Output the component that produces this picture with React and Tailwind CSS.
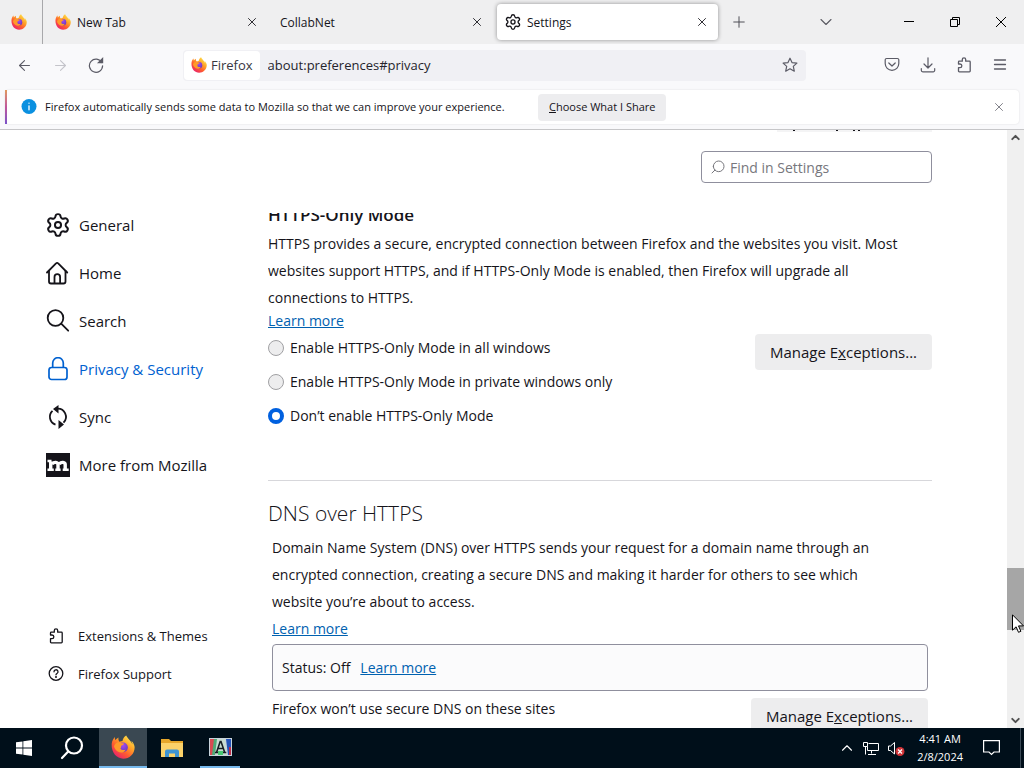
import React, { useState } from 'react'
import { X, Plus, ChevronDown, ChevronUp, ArrowLeft, ArrowRight, Search } from 'lucide-react'

const FirefoxLogo = ({ className }) => (
    <svg viewBox="0 0 32 32" className={className} aria-hidden="true">
        <defs>
            <linearGradient id="ff-body" x1="0.85" y1="0.1" x2="0.2" y2="0.95">
                <stop offset="0" stopColor="#ffe24a" />
                <stop offset="0.35" stopColor="#ffa027" />
                <stop offset="0.65" stopColor="#ff5a30" />
                <stop offset="1" stopColor="#e8206e" />
            </linearGradient>
            <radialGradient id="ff-globe" cx="0.5" cy="0.3" r="0.8">
                <stop offset="0" stopColor="#a44bef" />
                <stop offset="1" stopColor="#5b35b5" />
            </radialGradient>
        </defs>
        <path
            fill="url(#ff-body)"
            d="M30.5 12.5c-.7-1.8-2.3-3.8-3.4-4.4.9 1.8 1.4 3.3 1.6 4.5-1.8-4.5-4.9-6.3-7.5-10.3L20.2.5c-3.4 2-4.6 5.6-4.9 7.4-1.4 0-2.7.4-4 1C10 7.5 9.6 5.5 10 3.3 8.2 4.1 6.8 5.5 5.8 6.8c-.7-.8-.6-3.4-.6-4-1.2 1-4 4.4-4.3 9.2C.3 24 8 31.5 16.2 31.5c8.3 0 15.3-6.4 15.3-15 0-1.4-.3-2.8-1-4z"
        />
        <circle cx="16" cy="16.5" r="6.5" fill="url(#ff-globe)" />
        <path
            fill="#ff9a2a"
            d="M4 15c1.5-5 6-6.5 9-4.8 1.4 1 3.5.6 4.5 1.2.2 1.2-2.7 2.3-3.7 2.8-.8.5.2 2.7-1.3 3.3 1 3 5 3 7 1.8-1 4-6.5 5.5-10.5 2.7C6.5 20.5 4.5 18 4 15z"
        />
    </svg>
)

const GearIcon = ({ className }) => (
    <svg viewBox="1 1 22 22" className={className} fill="none" stroke="currentColor" strokeWidth="1.8" aria-hidden="true">
        <path
            strokeLinejoin="round"
            d="M9.671 4.136a2.34 2.34 0 0 1 4.659 0 2.34 2.34 0 0 0 3.319 1.915 2.34 2.34 0 0 1 2.33 4.033 2.34 2.34 0 0 0 0 3.831 2.34 2.34 0 0 1-2.33 4.033 2.34 2.34 0 0 0-3.319 1.915 2.34 2.34 0 0 1-4.659 0 2.34 2.34 0 0 0-3.32-1.915 2.34 2.34 0 0 1-2.33-4.033 2.34 2.34 0 0 0 0-3.831A2.34 2.34 0 0 1 6.35 6.051a2.34 2.34 0 0 0 3.319-1.915"
        />
        <circle cx="12" cy="12" r="2.8" />
    </svg>
)

const HomeIcon = ({ className }) => (
    <svg viewBox="0 0 24 24" className={className} fill="none" stroke="currentColor" strokeWidth="1.8" strokeLinecap="round" strokeLinejoin="round" aria-hidden="true">
        <path d="M1 11.5 10 2.3a1.5 1.5 0 0 1 2.2 0L21.2 11.5" />
        <path d="M3 10v10.5a2 2 0 0 0 2 2h12.5a2 2 0 0 0 2-2V10" />
        <path d="M8.5 22v-6a2.8 2.8 0 0 1 5.6 0v6" />
    </svg>
)

const SearchIcon = ({ className }) => (
    <svg viewBox="0 0 24 24" className={className} fill="none" stroke="currentColor" strokeWidth="1.8" strokeLinecap="round" aria-hidden="true">
        <circle cx="9.5" cy="9" r="7.8" />
        <path d="m15.2 14.7 7 7" />
    </svg>
)

const LockIcon = ({ className }) => (
    <svg viewBox="0 0 24 24" className={className} fill="none" stroke="currentColor" strokeWidth="1.7" aria-hidden="true">
        <rect x="3" y="10.5" width="18" height="12" rx="2.5" />
        <path d="M6.7 10.5V6a5.3 5.3 0 0 1 10.6 0v4.500" />
    </svg>
)

const SyncIcon = ({ className }) => (
    <svg viewBox="0 0 24 24" className={className} fill="none" stroke="currentColor" strokeWidth="1.8" aria-hidden="true">
        <path d="M9.5 19.6A8.2 8.2 0 0 1 6.5 5.8" />
        <path d="M11 3.6a8.2 8.2 0 0 1 6.5 14" />
        <path fill="currentColor" stroke="none" d="M7 4 12.5 0v8.5zM18 19.5 12.5 15v9z" />
    </svg>
)

const MozillaIcon = ({ className }) => (
    <svg viewBox="0 0 24 24" className={className} aria-hidden="true">
        <rect width="24" height="24" fill="#15141a" />
        <g fill="none" stroke="#fff" strokeWidth="3.4">
            <path d="M4.7 17V8.5M12 17v-5.5c0-2.5-3.8-3-6-.5M19.2 17v-5.5c0-2.5-3.8-3-6-.5" />
        </g>
        <path stroke="#fff" strokeWidth="2.4" d="M1.5 8h4M1.5 16.8h6.3M9.3 16.8h5.3M16.7 16.8h6" />
    </svg>
)

const PuzzleIcon = ({ className }) => (
    <svg viewBox="0 0 16 16" className={className} fill="none" stroke="currentColor" strokeWidth="1.3" strokeLinejoin="round" aria-hidden="true">
        <path d="M2.5 7V5a.8.8 0 0 1 .8-.8h3V2.500a1.700 1.700 0 0 1 3.400 0v1.700h3.700a.8.8 0 0 1 .8.8v9a.8.8 0 0 1-.8.8H3.300a.8.8 0 0 1-.8-.8v-3.300H4a1.800 1.800 0 0 0 0-3.700z" />
    </svg>
)

const HelpIcon = ({ className }) => (
    <svg viewBox="0 0 16 16" className={className} fill="none" stroke="currentColor" strokeWidth="1.3" strokeLinecap="round" aria-hidden="true">
        <circle cx="8" cy="7.5" r="6.8" />
        <path d="M6 5.8a2 2 0 1 1 3 1.700c-.7.400-1 .7-1 1.300" />
        <circle cx="8" cy="11" r="0.4" fill="currentColor" />
    </svg>
)

const ReloadIcon = ({ className }) => (
    <svg viewBox="0 0 16 16" className={className} fill="none" stroke="currentColor" strokeWidth="1.2" strokeLinecap="round" aria-hidden="true">
        <path d="M13.8 5.5A6.6 6.6 0 1 0 14.6 8.8" />
        <path fill="currentColor" d="M14.6 1.5v4.2h-4.2z" />
    </svg>
)

const StarIcon = ({ className }) => (
    <svg viewBox="0 0 16 16" className={className} fill="none" stroke="currentColor" strokeWidth="1.2" strokeLinejoin="round" aria-hidden="true">
        <path d="M8 1.2 10 5.6l4.9.5-3.6 3.3 1 4.8L8 11.8l-4.3 2.4 1-4.8L1.1 6.1 6 5.6z" />
    </svg>
)

const PocketIcon = ({ className }) => (
    <svg viewBox="0 0 16 16" className={className} fill="none" stroke="currentColor" strokeWidth="1.2" strokeLinecap="round" strokeLinejoin="round" aria-hidden="true">
        <path d="M2.6 1.5h10.8a1.4 1.4 0 0 1 1.4 1.4v3.6a6.8 6.8 0 0 1-13.6 0V2.9a1.4 1.4 0 0 1 1.4-1.4z" />
        <path d="m4.8 6 3.2 3 3.2-3" />
    </svg>
)

const DownloadIcon = ({ className }) => (
    <svg viewBox="0 0 16 16" className={className} fill="none" stroke="currentColor" strokeWidth="1.2" strokeLinecap="round" strokeLinejoin="round" aria-hidden="true">
        <path d="M8 .8v10M4 7l4 4 4-4M1.300 11.500v1.800a1.500 1.500 0 0 0 1.500 1.500h10.400a1.500 1.500 0 0 0 1.500-1.500v-1.800" />
    </svg>
)

const MenuIcon = ({ className }) => (
    <svg viewBox="0 0 16 16" className={className} stroke="currentColor" strokeWidth="1.3" strokeLinecap="round" aria-hidden="true">
        <path d="M2.500 3h11M2.500 7.500h11M2.500 12h11" />
    </svg>
)

const InfoIcon = ({ className }) => (
    <svg viewBox="0 0 16 16" className={className} aria-hidden="true">
        <circle cx="8" cy="7.5" r="7.5" fill="#0a90e0" />
        <path stroke="#fff" strokeWidth="1.3" strokeLinecap="round" d="M8 6.8v4M8 4.1v.1" />
    </svg>
)

const Tab = ({ title, icon, active }) => (
    <div
        className={`flex h-9 w-[221px] items-center rounded pr-1 pl-2 text-xs ${
            active ? 'bg-white shadow-[0_0_4px_rgba(0,0,0,0.4)]' : ''
        }`}
    >
        {icon}
        <span className="flex-1 truncate pt-px text-[#15141a]">{title}</span>
        <button type="button" aria-label={`Close ${title}`} className="flex size-6 items-center justify-center">
            <X size={14} strokeWidth={1.5} />
        </button>
    </div>
)

const TabBar = () => (
    <header className="flex h-11 shrink-0 items-center bg-[#efeff0]">
        <div className="flex h-full w-[43px] shrink-0 items-center justify-center border-r border-[#a8a8ab] pr-1">
            <FirefoxLogo className="size-4" />
        </div>
        <div className="flex min-w-0 items-center gap-1 pl-1">
            <Tab title="New Tab" icon={<FirefoxLogo className="mr-[6px] size-4" />} />
            <Tab title="CollabNet" />
            <Tab title="Settings" active icon={<GearIcon className="mr-[6px] size-4" />} />
        </div>
        <button type="button" aria-label="New tab" className="ml-px flex size-10 items-center justify-center text-[#4a4a52]">
            <Plus size={18} strokeWidth={1.3} />
        </button>
        <div className="flex flex-1 items-center justify-end">
            <button type="button" aria-label="List all tabs" className="flex h-11 w-10 items-center justify-center text-[#5a5a62]">
                <ChevronDown size={20} strokeWidth={1.3} />
            </button>
            <div className="ml-10 flex">
                <button type="button" aria-label="Minimize" className="flex h-11 w-[46px] items-center justify-center">
                    <svg viewBox="0 0 10 10" className="size-[10px]" stroke="#000"><path d="M0 4.5h10" /></svg>
                </button>
                <button type="button" aria-label="Restore" className="flex h-11 w-[46px] items-center justify-center">
                    <svg viewBox="0 0 10 10" className="size-[10px]" fill="none" stroke="#000">
                        <path d="M.5 2.500h7v7h-7zM2.500 2.500v-2h7v7h-2" />
                    </svg>
                </button>
                <button type="button" aria-label="Close" className="flex h-11 w-[46px] items-center justify-center">
                    <svg viewBox="0 0 10 10" className="size-[10px]" stroke="#000"><path d="m0 0 10 10M10 0 0 10" /></svg>
                </button>
            </div>
        </div>
    </header>
)

const Toolbar = () => (
    <div className="flex h-[42px] shrink-0 items-center bg-[#f9f9fb] px-4 text-[#5b5b66]">
        <div className="flex w-[167px] shrink-0 gap-[19px]">
            <button type="button" aria-label="Back"><ArrowLeft size={17} strokeWidth={1.5} /></button>
            <button type="button" aria-label="Forward" disabled className="text-[#c4c4ca]"><ArrowRight size={17} strokeWidth={1.5} /></button>
            <button type="button" aria-label="Reload"><ReloadIcon className="size-4" /></button>
        </div>
        <div className="flex h-[31px] flex-1 items-center rounded bg-[#f0f0f4] p-px pr-2">
            <div className="flex h-full items-center gap-1 rounded-sm bg-white px-[7px] text-[13px] text-[#38373f]">
                <FirefoxLogo className="size-4" />
                <span className="pt-px">Firefox</span>
            </div>
            <input
                aria-label="Address"
                defaultValue="about:preferences#privacy"
                className="ml-2 min-w-0 flex-1 bg-transparent pt-px text-[13px] text-[#25242c] outline-none"
            />
            <button type="button" aria-label="Bookmark"><StarIcon className="size-4" /></button>
        </div>
        <div className="ml-[78px] flex gap-5">
            <button type="button" aria-label="Pocket"><PocketIcon className="size-4" /></button>
            <button type="button" aria-label="Downloads"><DownloadIcon className="size-4" /></button>
            <button type="button" aria-label="Extensions"><PuzzleIcon className="size-4" /></button>
            <button type="button" aria-label="Menu"><MenuIcon className="size-4" /></button>
        </div>
    </div>
)

const NotificationBar = () => (
    <div className="shrink-0 border-b border-[#c6c6c8] bg-[#f9f9fb] px-[5px] pt-1 pb-[5px]">
        <div className="flex h-[34px] items-center rounded bg-white shadow-[0_0_2px_rgba(0,0,0,0.12)]">
            <div className="h-full w-[2px] bg-linear-to-b from-[#e0995a] via-[#c0559a] to-[#7a50c8]" />
            <InfoIcon className="mr-2 ml-[14px] size-4" />
            <p className="min-w-[473px] text-[11px] text-[#15141a]">
                Firefox automatically sends some data to Mozilla so that we can improve your experience.
            </p>
            <button type="button" className="ml-5 h-[27px] rounded bg-[#ededef] px-[11px] text-[11px] text-[#15141a]">
                <span className="underline">C</span>hoose What I Share
            </button>
            <button type="button" aria-label="Dismiss" className="mr-[13px] ml-auto text-[#5b5b66]">
                <X size={14} strokeWidth={1.3} />
            </button>
        </div>
    </div>
)

const categories = [
    { label: 'General', icon: GearIcon },
    { label: 'Home', icon: HomeIcon },
    { label: 'Search', icon: SearchIcon },
    { label: 'Privacy & Security', icon: LockIcon },
    { label: 'Sync', icon: SyncIcon },
    { label: 'More from Mozilla', icon: MozillaIcon },
]

const Sidebar = () => (
    <nav className="flex w-[268px] shrink-0 flex-col pt-[71px] pb-[35px] pl-[46px]">
        {categories.map(({ label, icon: Icon }) => (
            <button
                key={label}
                type="button"
                className={`flex h-12 items-center gap-[9px] text-[15px] ${
                    label === 'Privacy & Security' ? 'text-[#0061d0]' : 'text-[#15141a]'
                }`}
            >
                <Icon className="size-6" />
                <span className="pt-px">{label}</span>
            </button>
        ))}
        <div className="mt-auto flex flex-col text-[13px] text-[#15141a]">
            <a href="#addons" className="flex h-[38px] items-center gap-[14px] pl-[2px]">
                <PuzzleIcon className="size-4" />
                <span className="pt-px">Extensions &amp; Themes</span>
            </a>
            <a href="#support" className="flex h-[38px] items-center gap-[14px] pl-[2px]">
                <HelpIcon className="size-4" />
                <span className="pt-px">Firefox Support</span>
            </a>
        </div>
    </nav>
)

const LearnMore = () => (
    <a href="#learn" className="text-[#0061b0] underline">Learn more</a>
)

const ExceptionsButton = () => (
    <button type="button" className="h-9 w-[177px] shrink-0 rounded bg-[#ededee] pt-[2px] text-[15px] font-medium text-[#15141a]">
        Manage E<span className="underline">x</span>ceptions...
    </button>
)

const modes = [
    { id: 'all', label: 'Enable HTTPS-Only Mode in all windows' },
    { id: 'private', label: 'Enable HTTPS-Only Mode in private windows only' },
    { id: 'off', label: 'Don’t enable HTTPS-Only Mode' },
]

const HttpsOnly = () => {
    const [mode, setMode] = useState('off')

    return (
        <section className="border-b border-[#d7d7db] pb-[47px]">
            <h2 className="-mt-2 h-[25px] text-[17px] leading-5 font-semibold">HTTPS-Only Mode</h2>
            <p className="pr-6 leading-[27px]">
                HTTPS provides a secure, encrypted connection between Firefox and the websites you visit. Most
                websites support HTTPS, and if HTTPS-Only Mode is enabled, then Firefox will upgrade all
                connections to HTTPS.
            </p>
            <div className="leading-5"><LearnMore /></div>
            <div className="flex justify-between">
                <div>
                    {modes.map(({ id, label }) => (
                        <label key={id} className="flex h-[34px] items-center gap-[6px]">
                            <input
                                type="radio"
                                name="https-mode"
                                checked={mode === id}
                                onChange={() => setMode(id)}
                                className="size-4 shrink-0 appearance-none rounded-full border border-[#a0a0a3] bg-[#ededee] checked:border-4 checked:border-[#0060df] checked:bg-white"
                            />
                            {label}
                        </label>
                    ))}
                </div>
                <div className="pt-[3px]"><ExceptionsButton /></div>
            </div>
        </section>
    )
}

const DnsOverHttps = () => (
    <section className="pt-[14px]">
        <h1 className="mb-[3px] text-[21px] leading-9 font-light">DNS over HTTPS</h1>
        <div className="px-1">
            <p className="pr-6 leading-[27px]">
                Domain Name System (DNS) over HTTPS sends your request for a domain name through an
                encrypted connection, creating a secure DNS and making it harder for others to see which
                website you’re about to access.
            </p>
            <div className="leading-[27px]"><LearnMore /></div>
            <div className="mt-[2px] flex h-[47px] items-center gap-[10px] rounded border border-[#8f8f9d] bg-[#fbfbfc] px-[9px] pt-px">
                <span>Status: Off</span>
                <LearnMore />
            </div>
            <div className="flex items-start justify-between pt-[7px]">
                <span className="leading-[22px]">Firefox won’t use secure DNS on these sites</span>
                <ExceptionsButton />
            </div>
        </div>
    </section>
)

const Scrollbar = () => (
    <div className="relative ml-auto flex w-[17px] shrink-0 flex-col items-center justify-between bg-[#f0f0f0] text-[#505050]">
        <ChevronUp size={13} strokeWidth={3.5} className="mt-[1px]" />
        <div className="absolute top-[438px] h-[62px] w-full bg-[#a6a6a6]" />
        <ChevronDown size={13} strokeWidth={3.5} className="mb-[1px]" />
        <svg viewBox="0 0 12 19" className="absolute top-[484px] left-[5px] h-[19px] w-3" aria-hidden="true">
            <path d="M.5.8v15.4l3.6-3.4 2.4 5.5 2.4-1-2.4-5.4h5z" fill="#fff" stroke="#000" />
        </svg>
    </div>
)

const Taskbar = () => (
    <footer className="flex h-10 shrink-0 items-center bg-[#000f1a] text-white">
        <button type="button" aria-label="Start" className="flex h-full w-12 items-center justify-center">
            <svg viewBox="0 0 16 16" className="size-4" fill="#fff">
                <path d="M0 2.3 6.5 1.4v6.2H0zM7.3 1.3 16 0v7.6H7.3zM0 8.4h6.5v6.2L0 13.7zM7.3 8.4H16V16l-8.7-1.3z" />
            </svg>
        </button>
        <button type="button" aria-label="Search" className="flex h-full w-12 items-center justify-center">
            <svg viewBox="0 0 24 24" className="size-6" fill="none" stroke="#fff" strokeWidth="2.2" strokeLinecap="round">
                <circle cx="14" cy="9.5" r="8" />
                <path d="M8.2 15.5 2 22" />
            </svg>
        </button>
        <button type="button" aria-label="Firefox" className="ml-[3px] flex h-full w-12 items-center justify-center border-b-2 border-[#76b9ed] bg-[#3a4852]">
            <FirefoxLogo className="size-6" />
        </button>
        <button type="button" aria-label="File Explorer" className="flex h-full w-[50px] items-center justify-center">
            <svg viewBox="0 0 22 18" className="h-[18px] w-[22px]">
                <path fill="#e6a62a" d="M0 0h8l2 2h12v16H0z" />
                <path fill="#fbd26a" d="M0 4h22v14H0z" />
                <path fill="#3f94d2" d="M4 18v-5.5a2 2 0 0 1 2-2h10a2 2 0 0 1 2 2V18h-4v-3.5H8V18z" />
            </svg>
        </button>
        <button type="button" aria-label="Editor" className="ml-[3px] flex h-full w-10 items-center justify-center border-b-2 border-[#76b9ed]">
            <svg viewBox="0 0 23 18" className="h-[18px] w-[23px]">
                <path fill="#c8d4dc" d="M0 0h23v18H0z" />
                <path fill="#d84a52" d="M1 1h6v16H1z" />
                <path fill="#4eaa78" d="M5 1h4L6 17H3z" />
                <path fill="#c9dcd2" d="M8 1h8l2 16H6z" />
                <path fill="#2454b8" d="M17 1h5v16h-3z" />
                <path fill="#c02b44" d="M20 9h2v8h-2z" />
                <path fill="#48c872" d="M9 13h5v4H9z" />
                <path fill="none" stroke="#182026" strokeWidth="1.6" d="m7.5 14.5 3.7-11h.8l3.7 11M8.8 10.5h5.6M6 14.5h3M14 14.5h3.3" />
            </svg>
        </button>
        <div className="ml-auto flex h-full items-center">
            <button type="button" aria-label="Show hidden icons" className="mr-[7px]">
                <ChevronUp size={18} strokeWidth={1.5} />
            </button>
            <svg viewBox="0 0 17 15" className="mr-2 h-[15px] w-[17px]" fill="none" stroke="#fff" aria-hidden="true">
                <path d="M5.5 2.5h10v7H4.5v-4M.5 1.5h4v4h-4zM2.5 5.5v8M8.5 9.5v3M5 13.5h8" />
            </svg>
            <svg viewBox="0 0 17 15" className="h-[15px] w-[17px]" aria-hidden="true">
                <path fill="none" stroke="#fff" d="M.5 5v4.5h2l4 3.5V1.5L2.5 5z" />
                <circle cx="12" cy="10.5" r="4.5" fill="#d13438" />
                <path stroke="#fff" strokeWidth="1.2" d="m10 8.5 4 4M14 8.5l-4 4" />
            </svg>
            <div className="ml-3 text-center text-[11px] leading-[18px]">
                <div>4:41 AM</div>
                <div>2/8/2024</div>
            </div>
            <button type="button" aria-label="Notifications" className="mx-5">
                <svg viewBox="0 0 17 16" className="h-4 w-[17px]" fill="none" stroke="#fff" strokeWidth="1.2">
                    <path d="M.6.6h15.8v11.4h-5.4L8.5 14.5 6 12H.6z" />
                </svg>
            </button>
            <div className="mr-[3px] h-full w-px bg-[#3b4a56]" />
        </div>
    </footer>
)

const App = () => (
    <div className="flex h-screen flex-col overflow-hidden bg-white font-['Open_Sans','Noto_Sans',sans-serif] text-[#15141a]">
        <TabBar />
        <Toolbar />
        <NotificationBar />
        <div className="flex min-h-0 flex-1">
            <Sidebar />
            <main className="flex max-w-[664px] min-w-0 flex-1 flex-col text-sm">
                <div className="ml-auto h-[2px] w-[155px] shrink-0 bg-[#f4f4f5]">
                    <svg viewBox="0 0 155 2" className="h-[2px] w-full" stroke="#15141a" aria-hidden="true">
                        <path d="M16 .5h2M59 .5h2M76 .5h2M81 .5h2" />
                    </svg>
                </div>
                <div className="mt-[19px] mb-[30px] ml-auto flex h-8 w-[231px] shrink-0 items-center rounded border border-[#8f8f9d] px-2">
                    <Search size={16} strokeWidth={1.5} className="-scale-x-100 text-[#77777d]" />
                    <input
                        type="search"
                        aria-label="Find in Settings"
                        placeholder="Find in Settings"
                        className="ml-1 min-w-0 flex-1 pt-px outline-none placeholder:text-[#77777d]"
                    />
                </div>
                <div className="min-h-0 flex-1 overflow-hidden">
                    <HttpsOnly />
                    <DnsOverHttps />
                </div>
            </main>
            <Scrollbar />
        </div>
        <Taskbar />
    </div>
)

export default App
